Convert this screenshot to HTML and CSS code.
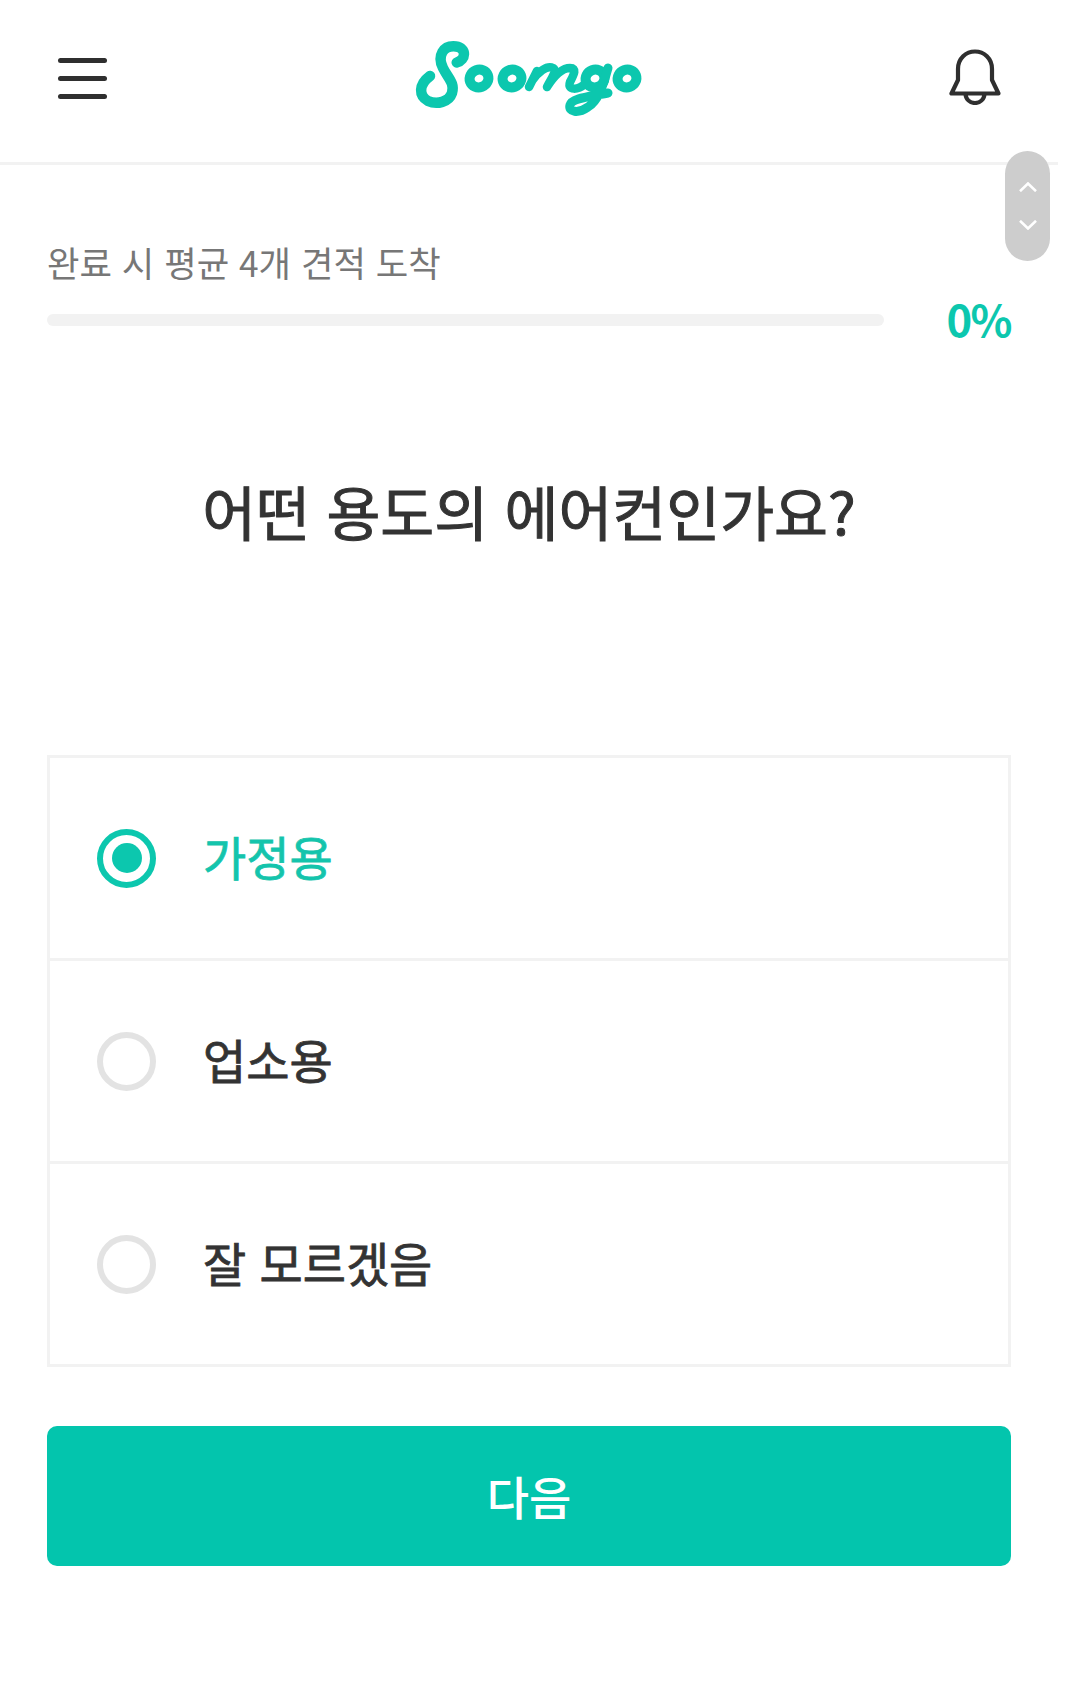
FILE: index.html
```html
<!DOCTYPE html>
<html lang="ko">
<head>
<meta charset="utf-8">
<title>Soomgo</title>
<link rel="stylesheet" href="styles.css">
</head>
<body>
<div class="page">
  <header class="topbar">
    <button class="menu" aria-label="메뉴"><span></span><span></span><span></span></button>
    <svg class="logo" viewBox="0 0 240 90" role="img" aria-label="Soomgo" fill="none" stroke="#0cc7ae" stroke-width="10" stroke-linecap="round" stroke-linejoin="round">
      <path stroke-width="10.500" d="M46.700 27.500C56 25 57 13 46 11.500C33 10 27 21 33 33C38 43 45 48 42 58C39 67 27 70 18 66C9 61 8 50 20 41"/>
      <ellipse cx="69" cy="43.500" rx="9.500" ry="8.800" transform="rotate(-20 69 43.500)"/>
      <ellipse cx="102" cy="43.500" rx="9.500" ry="8.800" transform="rotate(-20 102 43.500)"/>
      <path stroke-width="8.500" d="M119 52L127 36M122 46C128 37 137 30 143 33C148 36 140 45 137 52M137 52C144 41 152 33 160 33C168 33 163 41 160 47C157 56 168 55 175 49"/>
      <ellipse cx="185" cy="43.500" rx="9.500" ry="8.800" transform="rotate(-20 185 43.500)"/>
      <path stroke-width="9" d="M198 33C193 51 188 66 178 72C168 79 158 77 160 70C162 63 178 62 198 58"/>
      <ellipse cx="217" cy="43.500" rx="9.500" ry="8.800" transform="rotate(-20 217 43.500)"/>
    </svg>
    <svg class="bell" viewBox="0 0 52 56" fill="none" stroke="#2f2f2f" stroke-width="4.200" stroke-linejoin="round" stroke-linecap="round" aria-hidden="true">
      <path d="M2.500 44.500H49.500L43 31V20C43 9.500 35 2.500 26 2.500S9 9.500 9 20V31Z"/>
      <path d="M16.500 45C17 50.500 21 54 26 54S35 50.500 35.500 45"/>
    </svg>
  </header>

  <aside class="scroller" aria-hidden="true">
    <svg viewBox="0 0 18 10" fill="none" stroke="#fff" stroke-width="2.600"><path d="M1 9.200L9 1.500L17 9.200"/></svg>
    <svg viewBox="0 0 18 10" fill="none" stroke="#fff" stroke-width="2.600"><path d="M1 .8L9 8.500L17 .8"/></svg>
  </aside>

  <main class="content">
    <p class="hint">완료 시 평균 4개 견적 도착</p>
    <div class="progress">
      <div class="track"></div>
      <span class="percent">0%</span>
    </div>
    <h1 class="question">어떤 용도의 에어컨인가요?</h1>
    <ul class="options">
      <li class="option selected"><span class="radio"></span><span class="label">가정용</span></li>
      <li class="option"><span class="radio"></span><span class="label">업소용</span></li>
      <li class="option"><span class="radio"></span><span class="label">잘 모르겠음</span></li>
    </ul>
    <button class="next"><span>다음</span></button>
  </main>
</div>
</body>
</html>
```
FILE: styles.css
```css
* { box-sizing: border-box; }
html, body { margin: 0; padding: 0; background: #fff; }
body {
  font-family: "Noto Sans CJK KR", "Noto Sans", sans-serif;
  color: #333;
}
.page { position: relative; width: 1080px; height: 1686px; overflow: hidden; }

.topbar {
  width: 1058px;
  height: 165px;
  border-bottom: 3px solid #f2f2f2;
  display: flex;
  align-items: flex-start;
  justify-content: space-between;
  position: relative;
}
.menu {
  margin: 58px 0 0 58px;
  width: 49px;
  padding: 0;
  border: 0;
  background: none;
  display: flex;
  flex-direction: column;
  gap: 13px;
}
.menu span { display: block; height: 5px; border-radius: 3px; background: #2f2f2f; }
.logo { position: absolute; left: 410px; top: 35px; width: 240px; height: 90px; }
.bell { margin: 49px 57px 0 0; width: 52px; height: 56px; }

.scroller {
  position: absolute;
  left: 1005px;
  top: 151px;
  width: 45px;
  height: 110px;
  border-radius: 23px;
  background: #cdcdcd;
  display: flex;
  flex-direction: column;
  align-items: center;
  padding-top: 31px;
  gap: 28px;
}
.scroller svg { width: 18px; height: 10px; }

.content { width: 1058px; padding: 0 47px; }
.hint {
  margin: 72px 0 0;
  font-size: 35.300px;
  line-height: 50px;
  font-weight: 400;
  color: #777;
}
.progress {
  display: flex;
  align-items: center;
  justify-content: space-between;
  margin-top: 8px;
  height: 50px;
}
.track { width: 837px; height: 12px; border-radius: 6px; background: #f2f2f2; }
.percent { font-size: 43.500px; line-height: 48px; padding-bottom: 2px; font-weight: 700; color: #0cc7ae; letter-spacing: -1.500px; }

.question {
  margin: 121px 0 0;
  text-align: center;
  font-size: 58.600px;
  line-height: 90px;
  font-weight: 400;
  -webkit-text-stroke: 1px #333;
  color: #333;
}
.options {
  list-style: none;
  margin: 199px 0 0;
  padding: 0;
  border: 3px solid #f2f2f2;
}
.option {
  height: 203px;
  display: flex;
  align-items: center;
  padding-left: 47px;
  gap: 47px;
  font-size: 47px;
  font-weight: 400;
  border-bottom: 3px solid #f2f2f2;
}
.option:last-child { height: 200px; border-bottom: 0; }
.label { padding-bottom: 6px; -webkit-text-stroke: 0.8px currentColor; }
.radio {
  flex: none;
  width: 59px;
  height: 59px;
  border-radius: 50%;
  border: 6px solid #e3e3e3;
  display: flex;
  align-items: center;
  justify-content: center;
}
.selected .radio { border-color: #0cc7ae; }
.selected .radio::after { content: ""; width: 30px; height: 30px; border-radius: 50%; background: #0cc7ae; }
.selected .label { color: #14c4ac; }
.next {
  display: block;
  width: 100%;
  height: 140px;
  margin-top: 59px;
  padding: 0 0 2px;
  border: 0;
  border-radius: 10px;
  background: #03c5ad;
  color: #fff;
  font: 500 46px "Noto Sans CJK KR", sans-serif;
}
```
